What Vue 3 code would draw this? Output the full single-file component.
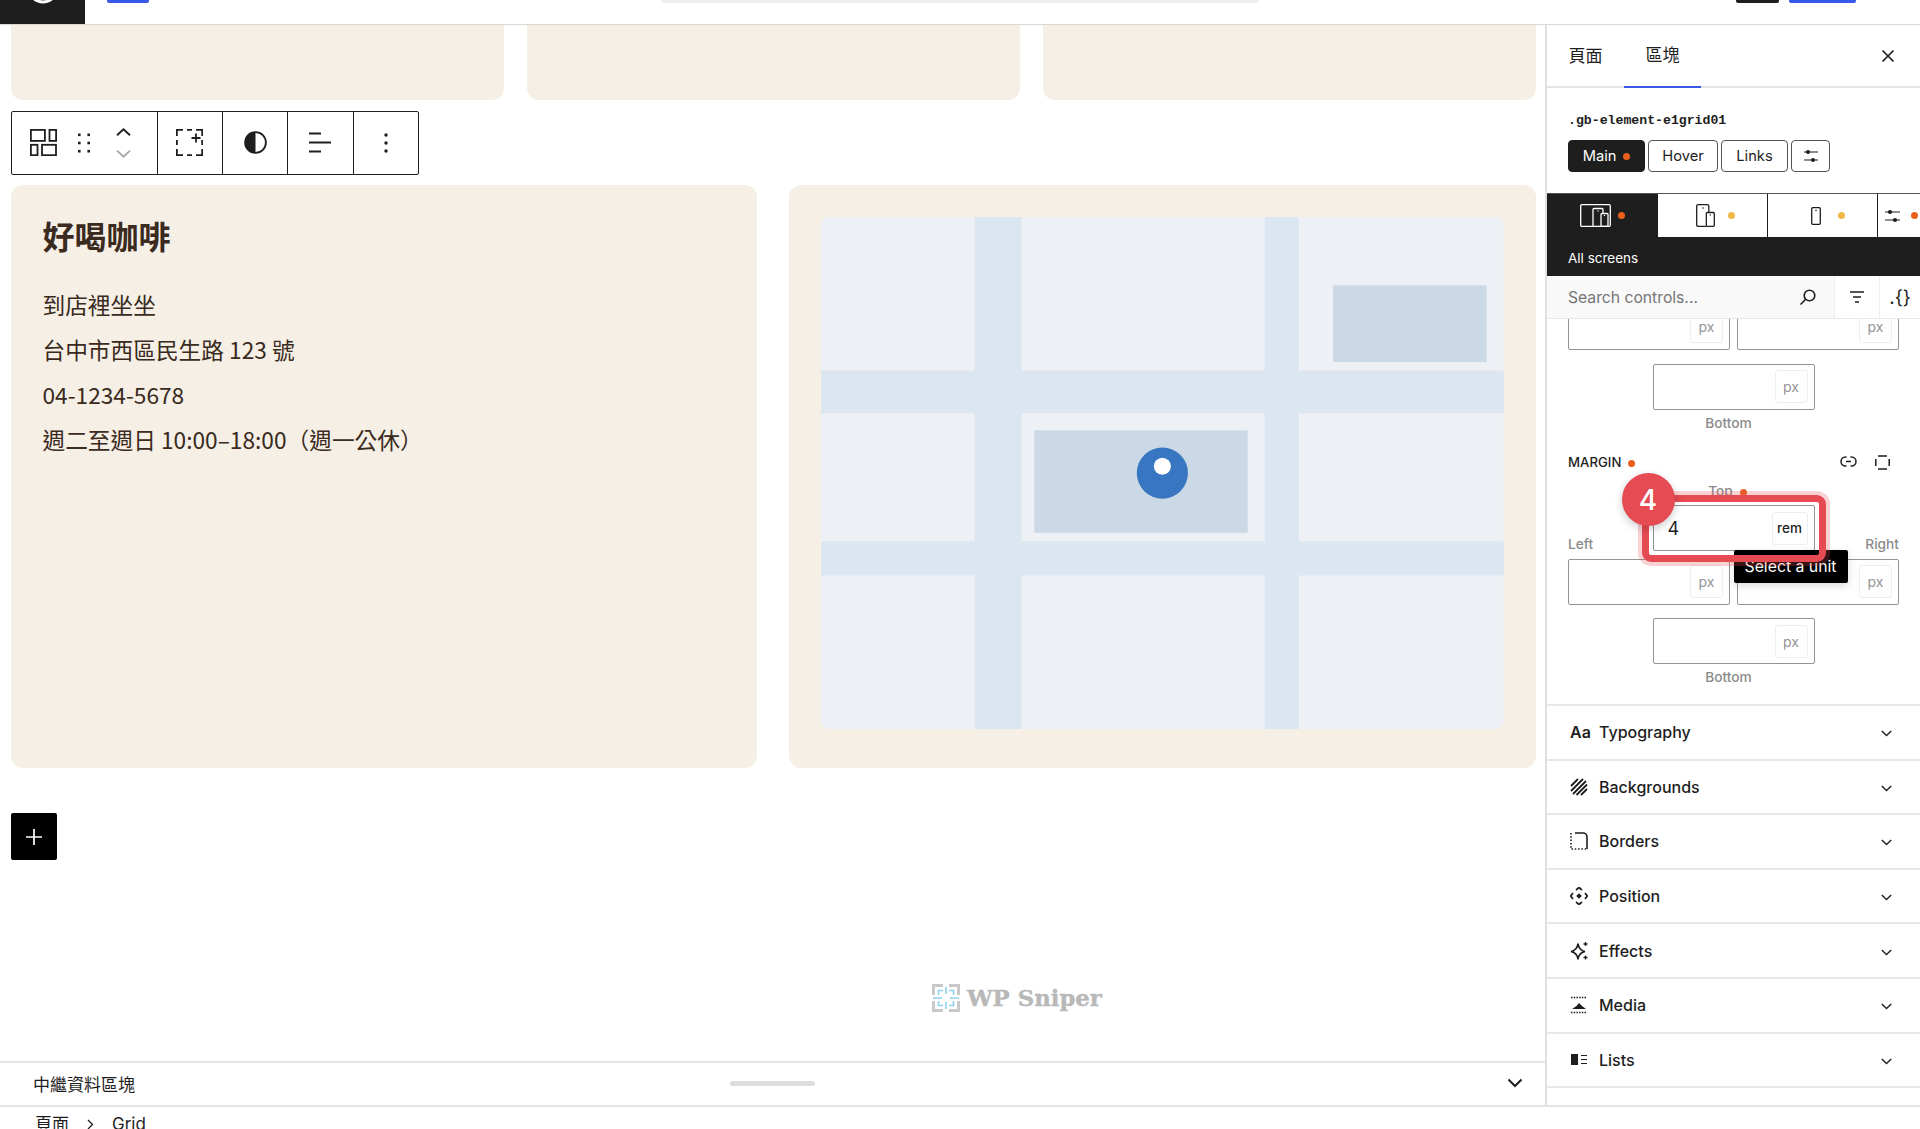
<template>
  <div class="app">
    <header class="topbar">
      <div class="wp-logo">
        <svg width="85" height="24" viewBox="0 0 85 24"><circle cx="43" cy="-12" r="14" fill="none" stroke="#fff" stroke-width="3" /></svg>
      </div>
      <span class="top-btn blue first"></span>
      <span class="top-search"></span>
      <span class="top-btn dark"></span>
      <span class="top-btn blue last"></span>
    </header>

    <div class="workspace">
      <div class="canvas">
        <div class="editor">
          <div class="top-cards">
            <div class="card-stub"></div>
            <div class="card-stub"></div>
            <div class="card-stub"></div>
          </div>

          <div class="toolbar">
            <div class="tool-group first">
              <svg width="27" height="27" viewBox="0 0 27 27" fill="none" stroke="#1e1e1e" stroke-width="1.8">
                <rect x="0.9" y="0.9" width="14" height="11" />
                <rect x="19.5" y="0.9" width="6.6" height="11" />
                <rect x="0.9" y="15.8" width="6.6" height="10.4" />
                <rect x="12" y="15.8" width="14" height="10.4" />
              </svg>
              <svg class="drag" width="12" height="20" viewBox="0 0 12 20" fill="#1e1e1e">
                <rect x="0" y="0.5" width="2.6" height="2.6" /><rect x="9.4" y="0.5" width="2.6" height="2.6" />
                <rect x="0" y="8.7" width="2.6" height="2.6" /><rect x="9.4" y="8.7" width="2.6" height="2.6" />
                <rect x="0" y="16.900" width="2.6" height="2.6" /><rect x="9.4" y="16.900" width="2.6" height="2.6" />
              </svg>
              <div class="movers">
                <svg width="15" height="8" viewBox="0 0 15 8" fill="none" stroke="#1e1e1e" stroke-width="1.9"><path d="M1 7.300l6.500-6L14 7.300" /></svg>
                <svg width="15" height="8" viewBox="0 0 15 8" fill="none" stroke="#a5a5a5" stroke-width="1.8"><path d="M1 .7l6.500 6L14 .7" /></svg>
              </div>
            </div>
            <div class="tool-group">
              <svg width="27" height="27" viewBox="0 0 27 27" fill="none" stroke="#1e1e1e" stroke-width="1.8">
                <path d="M7 .9H.9V7M.9 11v5M.9 20v6.200H7M11 26.200h5M20 26.200h6.200V20M26.200 16v-5M26.200 7V.9H20M11 .9h5" />
                <path d="M20 4.500v9M15.500 9h9" />
              </svg>
            </div>
            <div class="tool-group">
              <svg width="23" height="27" viewBox="0 0 23 27">
                <circle cx="11.500" cy="13.500" r="10.400" fill="#fff" stroke="#1e1e1e" stroke-width="1.800" />
                <path d="M11.500 3a10.500 10.500 0 0 0 0 21z" fill="#1e1e1e" />
              </svg>
            </div>
            <div class="tool-group">
              <svg width="23" height="21" viewBox="0 0 23 21" stroke="#1e1e1e" stroke-width="1.9"><path d="M0 1.500h12M0 10.500h22M0 19.500h12" /></svg>
            </div>
            <div class="tool-group">
              <svg width="4" height="20" viewBox="0 0 4 20" fill="#1e1e1e"><circle cx="2" cy="2" r="1.700" /><circle cx="2" cy="10" r="1.700" /><circle cx="2" cy="18" r="1.700" /></svg>
            </div>
          </div>

          <div class="content-row">
            <section class="info-card">
              <h2>好喝咖啡</h2>
              <p v-for="line in infoLines" :key="line">{{ line }}</p>
            </section>
            <section class="map-card">
              <svg class="map" viewBox="0 0 800 600">
                <rect width="800" height="600" rx="10" fill="#edf1f6" />
                <rect x="0" y="180" width="800" height="50" fill="#dce6f0" />
                <rect x="0" y="380" width="800" height="40" fill="#dce6f0" />
                <rect x="180" y="0" width="55" height="600" fill="#dce6f0" />
                <rect x="520" y="0" width="40" height="600" fill="#dce6f0" />
                <rect x="250" y="250" width="250" height="120" fill="#cbd8e5" />
                <rect x="600" y="80" width="180" height="90" fill="#cbd8e5" />
                <circle cx="400" cy="300" r="30" fill="#3876c2" />
                <circle cx="400" cy="292" r="10" fill="#fff" />
              </svg>
            </section>
          </div>

          <button class="add-btn">
            <svg width="18" height="18" viewBox="0 0 18 18" stroke="#fff" stroke-width="1.7"><path d="M9 1v16M1 9h16" /></svg>
          </button>

          <div class="watermark">
            <svg width="28" height="28" viewBox="0 0 28 28" fill="none">
              <path d="M11 1.500H1.500V11M17 1.500h9.500V11M11 26.500H1.500V17M17 26.500h9.500V17" stroke="#c9c9c9" stroke-width="3" />
              <path d="M11 6.500H6.500V11M17 6.500h4.500V11M11 21.500H6.500V17M17 21.500h4.500V17M14 3v7M14 18v7M1 14h9M18 14h9" stroke="#8ed0ef" stroke-width="1.600" />
            </svg>
            <span>WP Sniper</span>
          </div>
        </div>

        <div class="metabar">
          <span class="meta-title">中繼資料區塊</span>
          <span class="meta-handle"></span>
          <svg class="meta-chevron" width="16" height="10" viewBox="0 0 16 10" fill="none" stroke="#1e1e1e" stroke-width="2"><path d="M1.500 1.500L8 8l6.500-6.500" /></svg>
        </div>
      </div>

      <aside class="sidebar">
        <div class="side-tabs">
          <span class="side-tab">頁面</span>
          <span class="side-tab active">區塊</span>
          <svg class="side-close" width="14" height="14" viewBox="0 0 14 14" stroke="#1e1e1e" stroke-width="1.700"><path d="M1.500 1.500l11 11M12.500 1.500l-11 11" /></svg>
        </div>

        <div class="selector">.gb-element-e1grid01</div>
        <div class="state-btns">
          <button class="state-btn on">Main<i class="dot orange"></i></button>
          <button class="state-btn hover-btn">Hover</button>
          <button class="state-btn links-btn">Links</button>
          <button class="state-btn icon-btn">
            <svg width="16" height="14" viewBox="0 0 16 14" stroke="#1e1e1e" stroke-width="1.200"><path d="M1 3h14M1 11h14" /><circle cx="5" cy="3" r="2" fill="#1e1e1e" stroke="none" /><circle cx="10" cy="11" r="2" fill="#1e1e1e" stroke="none" /></svg>
          </button>
        </div>

        <div class="devices">
          <div class="device-tabs">
            <div class="device-tab on">
              <span class="device-icon">
                <svg width="31" height="23" viewBox="0 0 31 23" fill="none" stroke="#fff" stroke-width="1.300">
                  <rect x="0.7" y="0.7" width="29.600" height="21.600" rx="1.200" />
                  <path d="M13 22V5.500a1 1 0 0 1 1-1h8a1 1 0 0 1 1 1V9" />
                  <rect x="21" y="9.500" width="7" height="12.800" rx="1" />
                  <circle cx="18" cy="7" r=".7" fill="#fff" stroke="none" /><circle cx="24.500" cy="11.500" r=".7" fill="#fff" stroke="none" />
                </svg>
              </span>
              <i class="dot orange"></i>
            </div>
            <div class="device-tab">
              <span class="device-icon">
                <svg width="19" height="23" viewBox="0 0 19 23" fill="none" stroke="#1e1e1e" stroke-width="1.300">
                  <path d="M10 22.300H2a1.300 1.300 0 0 1-1.300-1.300V2A1.300 1.300 0 0 1 2 .7h9.500A1.300 1.300 0 0 1 12.800 2v6.500" />
                  <rect x="10.300" y="8.500" width="8" height="13.800" rx="1" />
                  <circle cx="7" cy="4" r=".8" fill="#1e1e1e" stroke="none" /><circle cx="14.300" cy="11" r=".7" fill="#1e1e1e" stroke="none" />
                </svg>
              </span>
              <i class="dot yellow"></i>
            </div>
            <div class="device-tab">
              <span class="device-icon">
                <svg width="10" height="18" viewBox="0 0 10 18" fill="none" stroke="#1e1e1e" stroke-width="1.300">
                  <rect x="0.7" y="0.7" width="8.600" height="16.600" rx="1" />
                  <circle cx="5" cy="3.500" r=".8" fill="#1e1e1e" stroke="none" />
                </svg>
              </span>
              <i class="dot yellow"></i>
            </div>
            <div class="device-tab last">
              <svg width="15" height="14" viewBox="0 0 15 14" stroke="#1e1e1e" stroke-width="1.200"><path d="M0 3h15M0 11h15" /><circle cx="5" cy="3" r="2.100" fill="#1e1e1e" stroke="none" /><circle cx="10" cy="11" r="2.100" fill="#1e1e1e" stroke="none" /></svg>
              <i class="dot orange"></i>
            </div>
          </div>
          <div class="device-label">All screens</div>
        </div>

        <div class="search-row">
          <div class="search-box">
            <span>Search controls...</span>
            <svg width="18" height="18" viewBox="0 0 18 18" fill="none" stroke="#1e1e1e" stroke-width="1.600"><circle cx="10.500" cy="7.500" r="5.300" /><path d="M6.700 11.300L1.500 16.500" /></svg>
          </div>
          <div class="search-cell">
            <svg width="14" height="12" viewBox="0 0 14 12" stroke="#1e1e1e" stroke-width="1.600"><path d="M0 1h14M3 6h8M5 11h4" /></svg>
          </div>
          <div class="search-cell braces">.{}</div>
        </div>

        <div class="controls">
          <div class="controls-inner">
            <div class="box-group padding-box">
              <div class="box-row no-labels">
                <div class="box-input"><span class="chip">px</span></div>
                <div class="box-input"><span class="chip">px</span></div>
              </div>
              <div class="box-center">
                <div class="box-input narrow"><span class="chip">px</span></div>
                <label>Bottom</label>
              </div>
            </div>

            <div class="box-group">
              <div class="group-head">
                <span class="group-title">MARGIN<i class="dot orange"></i></span>
                <div class="group-tools">
                  <svg width="17" height="12" viewBox="0 0 17 12" fill="none" stroke="#1e1e1e" stroke-width="1.500"><path d="M6.500 1H5.500a4.500 4.500 0 0 0 0 9h1M10.500 1h1a4.500 4.500 0 0 1 0 9h-1M6 5.500h5" /></svg>
                  <svg width="15" height="15" viewBox="0 0 15 15" fill="none" stroke="#1e1e1e" stroke-width="1.500"><path d="M3 1h9M3 14h9M.8 4v7M14.200 4v7" /></svg>
                </div>
              </div>
              <div class="box-center top-side">
                <label>Top<i class="dot orange"></i></label>
                <div class="box-input narrow active">
                  <span class="value">4</span>
                  <span class="chip dark-chip">rem</span>
                  <div class="tooltip">Select a unit</div>
                  <div class="ring"></div>
                  <div class="step-badge">4</div>
                </div>
              </div>
              <div class="box-row">
                <div class="box-side">
                  <label>Left</label>
                  <div class="box-input"><span class="chip">px</span></div>
                </div>
                <div class="box-side right">
                  <label>Right</label>
                  <div class="box-input"><span class="chip">px</span></div>
                </div>
              </div>
              <div class="box-center after-row">
                <div class="box-input narrow"><span class="chip">px</span></div>
                <label>Bottom</label>
              </div>
            </div>

            <div v-for="panel in panels" :key="panel.label" class="panel-row">
              <span v-if="panel.text" class="panel-aa">{{ panel.text }}</span>
              <svg v-else class="panel-icon" width="18" height="18" viewBox="0 0 18 18" v-html="panel.icon"></svg>
              <span class="panel-label">{{ panel.label }}</span>
              <svg class="panel-chevron" width="11" height="7" viewBox="0 0 11 7" fill="none" stroke="#1e1e1e" stroke-width="1.400"><path d="M.8 1l4.700 4.500L10.200 1" /></svg>
            </div>
          </div>
        </div>
      </aside>
    </div>

    <footer class="crumbs">
      <span>頁面</span>
      <svg width="7" height="11" viewBox="0 0 7 11" fill="none" stroke="#1e1e1e" stroke-width="1.300"><path d="M1 1l4.500 4.500L1 10" /></svg>
      <span>Grid</span>
    </footer>
  </div>
</template>

<script setup>
const infoLines = [
  "到店裡坐坐",
  "台中市西區民生路 123 號",
  "04-1234-5678",
  "週二至週日 10:00–18:00（週一公休）",
];

const panels = [
  { label: "Typography", text: "Aa" },
  {
    label: "Backgrounds",
    icon: '<path d="M1 8L8 1M1 13L13 1M3 16L16 3M6.500 17L17 6.500M11 17L17 11" stroke="#1e1e1e" stroke-width="1.800" fill="none"/>',
  },
  {
    label: "Borders",
    icon: '<path d="M5 1h8a4 4 0 0 1 4 4v12" fill="none" stroke="#1e1e1e" stroke-width="1.600"/><path d="M1 1v16h16" fill="none" stroke="#1e1e1e" stroke-width="1.600" stroke-dasharray="1.500 1.800"/>',
  },
  {
    label: "Position",
    icon: '<path d="M6 3l3-2.500L12 3M6 15l3 2.500L12 15M3 6L.7 9 3 12M15 6l2.300 3L15 12" fill="none" stroke="#1e1e1e" stroke-width="1.700"/><path d="M9 6.200L11.800 9 9 11.800 6.200 9z" fill="#1e1e1e"/>',
  },
  {
    label: "Effects",
    icon: '<path d="M8 1.500C8.500 6 10 8.500 15 9.500 10 10.500 8.500 13 8 17.500 7.500 13 6 10.500 1 9.500 6 8.500 7.500 6 8 1.500z" fill="none" stroke="#1e1e1e" stroke-width="1.700"/><path d="M15.500 0v4M13.500 2h4M15.500 13.500v4M13.500 15.500h4" stroke="#1e1e1e" stroke-width="1.300"/>',
  },
  {
    label: "Media",
    icon: '<path d="M1 1.500h16M1 16.500h16" stroke="#1e1e1e" stroke-width="1.600" stroke-dasharray="1.500 1.200" fill="none"/><path d="M2 13l4.500-3 2.500-3 3 3 4 3z" fill="#1e1e1e"/>',
  },
  {
    label: "Lists",
    icon: '<rect x="1" y="3" width="7" height="11" fill="#1e1e1e"/><path d="M11 4.500h6M11 8.500h6M11 12.500h6" stroke="#1e1e1e" stroke-width="1.200"/>',
  },
];
</script>

<style>
html,
body {
  margin: 0;
  background: #fff;
}
</style>

<style scoped>
.app {
  height: 1129px;
  display: flex;
  flex-direction: column;
  overflow: hidden;
  font-family: Inter, "Noto Sans CJK TC", sans-serif;
  color: #1e1e1e;
}

.topbar {
  height: 24px;
  flex: none;
  display: flex;
  align-items: flex-start;
  background: #fff;
  border-bottom: 1px solid #dcd9d3;
}

.wp-logo {
  width: 85px;
  height: 24px;
  background: #1e1e1e;
}

.top-btn {
  height: 2.500px;
  border-radius: 0 0 2px 2px;
}

.top-btn.blue {
  background: #3858e9;
}

.top-btn.first {
  width: 42px;
  margin-left: 22px;
}

.top-btn.dark {
  width: 43px;
  background: #1e1e1e;
  margin-left: 477px;
}

.top-btn.last {
  width: 67px;
  margin-left: 10px;
}

.top-search {
  width: 598px;
  height: 2.500px;
  margin-left: 512px;
  background: #f0f0f0;
  border-radius: 0 0 3px 3px;
}

.workspace {
  height: 1080px;
  flex: none;
  display: flex;
}

.canvas {
  flex: 1;
  min-width: 0;
  display: flex;
  flex-direction: column;
}

.editor {
  position: relative;
  flex: 1;
  padding: 0 9px 0 11px;
  overflow: hidden;
}

.top-cards {
  display: grid;
  grid-template-columns: repeat(3, 1fr);
  gap: 23.500px;
}

.card-stub {
  height: 75px;
  background: #f5efe6;
  border-radius: 0 0 12px 12px;
}

.toolbar {
  display: flex;
  width: 408px;
  height: 64px;
  margin-top: 10.500px;
  box-sizing: border-box;
  border: 1px solid #1e1e1e;
  border-radius: 2px;
  background: #fff;
}

.tool-group {
  width: 65.500px;
  display: flex;
  align-items: center;
  justify-content: center;
  border-left: 1px solid #1e1e1e;
  box-sizing: border-box;
}

.tool-group.first {
  width: 145px;
  border-left: none;
  justify-content: flex-start;
  padding-left: 18px;
}

.drag {
  margin-left: 21px;
}

.movers {
  display: flex;
  flex-direction: column;
  gap: 14px;
  margin-left: 26px;
}

.movers svg {
  display: block;
}

.content-row {
  display: grid;
  grid-template-columns: 1fr 1fr;
  gap: 32px;
  margin-top: 10.500px;
  margin-left: -0.5px;
  height: 583px;
}

.info-card,
.map-card {
  background: #f5efe6;
  border-radius: 12px;
  padding: 32px;
  color: #3a2a20;
}

.map-card {
  padding-top: 32.300px;
}

.info-card h2 {
  margin: 0 0 27.500px;
  font-size: 32px;
  line-height: 37px;
  font-weight: 700;
  font-family: "Noto Sans CJK TC", sans-serif;
}

.info-card p {
  margin: 0;
  font-size: 22.700px;
  line-height: 45.300px;
  font-family: "Noto Sans CJK TC", sans-serif;
}

.map {
  display: block;
  width: 100%;
}

.add-btn {
  display: flex;
  align-items: center;
  justify-content: center;
  width: 46px;
  height: 47px;
  margin-top: 45px;
  padding: 0;
  border: none;
  border-radius: 2px;
  background: #000;
}

/* video watermark, sits over the page */
.watermark {
  position: absolute;
  left: 932px;
  top: 959px;
  display: flex;
  align-items: center;
  gap: 7px;
  color: #b8b8b8;
  font-family: "DejaVu Serif", serif;
  font-weight: 700;
  font-size: 22.800px;
  -webkit-text-stroke: 0.4px #b8b8b8;
}

.metabar {
  height: 44px;
  flex: none;
  box-sizing: border-box;
  display: grid;
  grid-template-columns: 1fr auto 1fr;
  align-items: center;
  padding: 0 22px 2px 33px;
  border-top: 2px solid #e4e4e4;
}

.meta-title {
  font-size: 17px;
  font-family: "Noto Sans CJK TC", sans-serif;
}

.meta-handle {
  width: 85px;
  height: 5px;
  border-radius: 3px;
  background: #ddd;
  margin-left: -11px;
}

.meta-chevron {
  justify-self: end;
}

.sidebar {
  width: 375px;
  flex: none;
  box-sizing: border-box;
  border-left: 2px solid #e0e0e0;
  display: flex;
  flex-direction: column;
  background: #fff;
}

.side-tabs {
  height: 63px;
  flex: none;
  box-sizing: border-box;
  display: flex;
  align-items: center;
  border-bottom: 2px solid #e4e4e4;
  position: relative;
}

.side-tab {
  width: 77px;
  height: 62px;
  line-height: 60px;
  text-align: center;
  font-size: 17px;
  font-family: "Noto Sans CJK TC", sans-serif;
}

.side-tab.active {
  border-bottom: 2px solid #3858e9;
}

.side-close {
  margin-left: auto;
  margin-right: 25px;
}

.selector {
  margin: 25px 0 11px 21px;
  font-family: "Liberation Mono", monospace;
  font-size: 13.200px;
  font-weight: 700;
  line-height: 16px;
  flex: none;
}

.state-btns {
  display: flex;
  gap: 3px;
  padding-left: 21px;
  margin-bottom: 21px;
  flex: none;
}

.state-btn {
  height: 32px;
  padding: 0;
  box-sizing: border-box;
  border: 1px solid #555;
  border-radius: 4px;
  background: #fff;
  color: #1e1e1e;
  font: 14.700px Inter, sans-serif;
  display: flex;
  align-items: center;
  justify-content: center;
}

.state-btn.on {
  width: 77px;
  background: #1e1e1e;
  color: #fff;
  border-color: #1e1e1e;
}

.hover-btn {
  width: 70px;
}

.links-btn {
  width: 67px;
}

.icon-btn {
  width: 39px;
}

.dot {
  display: inline-block;
  width: 7px;
  height: 7px;
  border-radius: 50%;
  margin-left: 7px;
  vertical-align: middle;
}

.dot.orange {
  background: #e8601c;
}

.dot.yellow {
  background: #f0b849;
}

.devices {
  flex: none;
  height: 83px;
  box-sizing: border-box;
  background: #1e1e1e;
  border-top: 1px solid #555;
}

.device-tabs {
  display: flex;
  height: 44px;
}

.device-tab {
  width: 110px;
  flex: none;
  box-sizing: border-box;
  background: #fff;
  border-left: 1px solid #1e1e1e;
  border-bottom: 1px solid #1e1e1e;
  display: flex;
  align-items: center;
  padding-left: 31px;
}

.device-icon {
  width: 33px;
  flex: none;
  display: flex;
  justify-content: center;
}

.device-tab i {
  flex: none;
  margin-left: 6px;
}

.device-tab.on {
  background: #1e1e1e;
  border-left: none;
  padding-left: 32px;
}

.device-tab.last {
  width: 43px;
  padding-left: 7px;
}

.device-tab.last i {
  margin-left: 11px;
}

.device-label {
  margin: 12px 0 0 21px;
  color: #fff;
  font-size: 13.500px;
  line-height: 16px;
}

.search-row {
  flex: none;
  display: flex;
  height: 43px;
  box-sizing: border-box;
  border-bottom: 1px solid #e8e8e8;
  position: relative;
  z-index: 1;
  background: #fff;
}

.search-box {
  width: 287px;
  box-sizing: border-box;
  background: #f9f9f9;
  display: flex;
  align-items: center;
  justify-content: space-between;
  padding: 0 17px 0 21px;
  font-size: 15.700px;
  color: #757575;
}

.search-cell {
  width: 44px;
  display: flex;
  align-items: center;
  justify-content: center;
  border-left: 1px solid #eee;
}

.braces {
  flex: 1;
  font-size: 19px;
  color: #1e1e1e;
}

.controls {
  flex: 1;
  min-height: 0;
  overflow: hidden;
}

.controls-inner {
  margin-top: -15.500px;
}

.box-group {
  padding: 0 21px;
}

.padding-box {
  padding-bottom: 23.500px;
}

.box-group:not(.padding-box) {
  padding-bottom: 19px;
  border-bottom: 2px solid #e8e8e8;
}

.box-row {
  display: grid;
  grid-template-columns: 1fr 1fr;
  gap: 7px;
  margin-top: -15px;
}

.box-row.no-labels {
  margin-top: 0;
}

.box-center {
  display: flex;
  flex-direction: column;
  align-items: center;
  margin-top: 14px;
}

.box-center.after-row {
  margin-top: 13.500px;
}

.box-input {
  position: relative;
  height: 46px;
  box-sizing: border-box;
  border: 1px solid #949494;
  border-radius: 2px;
  background: #fff;
  display: flex;
  align-items: center;
  justify-content: flex-end;
  padding-right: 6px;
}

.box-input.narrow {
  width: 162px;
}

.chip {
  width: 33px;
  height: 33px;
  box-sizing: border-box;
  border: 1px solid #eee;
  border-radius: 3px;
  display: flex;
  align-items: center;
  justify-content: center;
  font-size: 14px;
  color: #949494;
}

.dark-chip {
  width: 36px;
  color: #1e1e1e;
  font-size: 13.500px;
  font-weight: 500;
  background: #fff;
}

.value {
  margin-right: auto;
  margin-left: 14px;
  font-size: 18px;
}

label {
  font-size: 13.700px;
  line-height: 16px;
  color: #8a8a8a;
  font-weight: 500;
}

.box-center label {
  margin-top: 5px;
  transform: translateX(-5px);
}

.top-side {
  margin-top: 13px;
}

.top-side label {
  margin: 0 0 6px;
  transform: translateX(-6px);
}

.box-side {
  display: flex;
  flex-direction: column;
  gap: 6.500px;
}

.box-side.right label {
  text-align: right;
}

.group-head {
  display: flex;
  align-items: center;
  justify-content: space-between;
  height: 16px;
  padding-right: 9px;
}

.group-title {
  font-size: 13.200px;
  font-weight: 500;
}

.group-tools {
  display: flex;
  align-items: center;
  gap: 18px;
}

.ring {
  position: absolute;
  left: -12px;
  right: -12px;
  top: -11px;
  bottom: -12px;
  border: 7px solid #e64a52;
  border-radius: 9px;
  box-shadow: 0 0 0 4px rgba(230, 74, 82, 0.25);
  z-index: 3;
  pointer-events: none;
}

.step-badge {
  position: absolute;
  left: -32px;
  top: -33px;
  width: 53px;
  height: 53px;
  border-radius: 50%;
  background: #e64a52;
  color: #fff;
  font-size: 28px;
  font-weight: 500;
  display: flex;
  align-items: center;
  justify-content: center;
  box-shadow: 0 3px 8px rgba(0, 0, 0, 0.2);
  z-index: 4;
}

.tooltip {
  position: absolute;
  left: 80px;
  top: 44px;
  width: 114px;
  height: 33px;
  background: #000;
  color: #fff;
  font-size: 15.800px;
  border-radius: 2px;
  display: flex;
  align-items: center;
  justify-content: center;
  box-shadow: 0 3px 8px rgba(0, 0, 0, 0.15);
  z-index: 2;
}

.active {
  z-index: 2;
}

.panel-row {
  height: 54.600px;
  box-sizing: border-box;
  display: flex;
  align-items: center;
  padding: 0 28px 0 23px;
  border-bottom: 2px solid #e8e8e8;
}

.panel-icon,
.panel-aa {
  width: 18px;
  flex: none;
}

.panel-aa {
  font-size: 16px;
  font-weight: 600;
  line-height: 18px;
  white-space: nowrap;
}

.panel-label {
  flex: 1;
  margin-left: 11px;
  font-size: 16px;
  font-weight: 500;
}

.panel-chevron {
  margin-top: 3px;
}

.crumbs {
  height: 24px;
  flex: none;
  box-sizing: border-box;
  display: flex;
  align-items: flex-start;
  gap: 18px;
  padding-left: 35px;
  border-top: 2px solid #e4e4e4;
  font-size: 17px;
  line-height: 34px;
  overflow: hidden;
  font-family: Inter, "Noto Sans CJK TC", sans-serif;
}

.crumbs svg {
  margin-top: 12px;
  flex: none;
}
</style>
